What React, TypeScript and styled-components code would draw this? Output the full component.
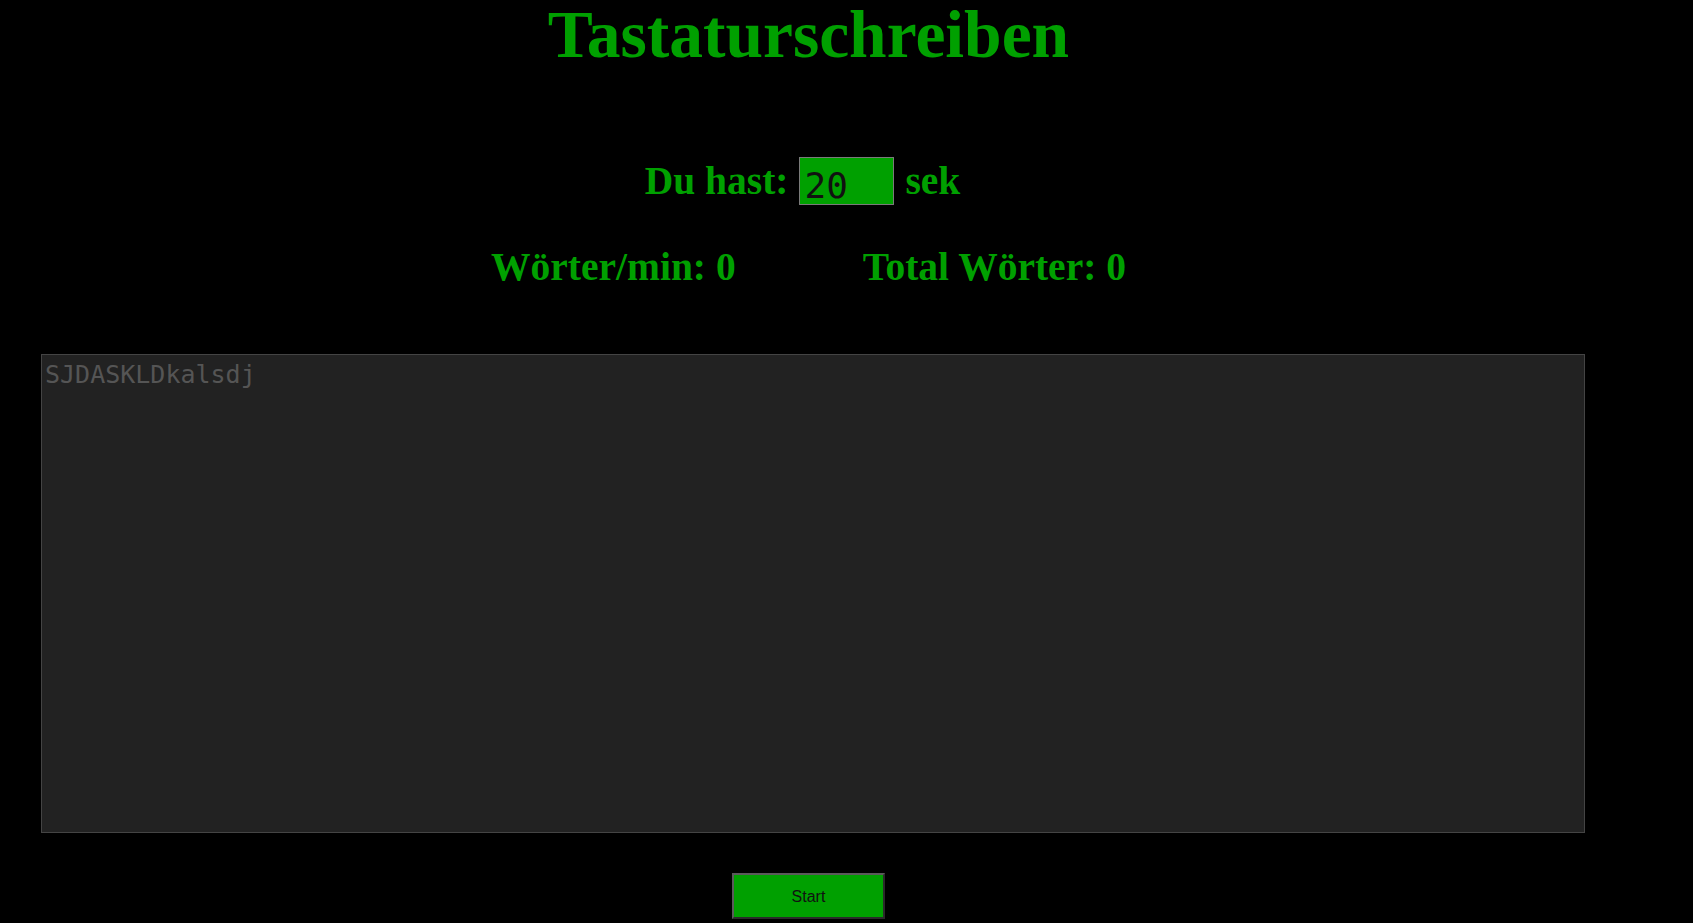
import React from "react";
import styled, { createGlobalStyle } from "styled-components";

const GlobalStyle = createGlobalStyle`
  html, body {
    margin: 0;
    padding: 0;
    background: #000;
  }
  body {
    font-family: "Liberation Serif", "Times New Roman", serif;
    overflow: hidden;
  }
`;

const green = "#00a000";

const Page = styled.main`
  width: 1617px;
  display: flex;
  flex-direction: column;
  align-items: center;
`;

const Title = styled.h1`
  margin: 1px 0 0;
  font-family: "Liberation Serif", "Times New Roman", serif;
  font-weight: 700;
  font-size: 67.5px;
  line-height: 67px;
  color: ${green};
`;

const TimeRow = styled.div`
  margin-top: 89px;
  margin-right: 12px;
  display: flex;
  align-items: center;
  gap: 11px;
  height: 48px;
`;

const Label = styled.span`
  font-family: "Liberation Serif", "Times New Roman", serif;
  font-weight: 700;
  font-size: 39.5px;
  line-height: 40px;
  color: ${green};
  white-space: pre;
`;

const SecondsInput = styled.input`
  box-sizing: border-box;
  width: 95px;
  height: 48px;
  margin: 0;
  padding: 9px 4px 0;
  border: 1px solid #7a7a7a;
  background: ${green};
  color: #111;
  font-family: "DejaVu Sans Mono", monospace;
  font-size: 36px;
  line-height: 38px;
  outline: none;
`;

const StatsRow = styled.div`
  margin-top: 42px;
  display: flex;
  gap: 127px;
  height: 40px;
`;

const TypingArea = styled.textarea`
  box-sizing: border-box;
  align-self: flex-start;
  margin: 67px 0 0 41px;
  width: 1544px;
  height: 479px;
  padding: 5px 3px;
  border: 1px solid #444;
  background: #222;
  color: #ddd;
  font-family: "DejaVu Sans Mono", monospace;
  font-size: 25px;
  line-height: 30px;
  resize: none;
  outline: none;
  &::placeholder {
    color: #555;
  }
`;

const StartButton = styled.button`
  box-sizing: border-box;
  margin-top: 40px;
  width: 153px;
  height: 46px;
  padding: 2px 0 0;
  background: ${green};
  border-style: solid;
  border-width: 2px;
  border-color: #5a5a5a #2a2a2a #2a2a2a #5a5a5a;
  color: #111;
  font-family: "Liberation Sans", Arial, sans-serif;
  font-size: 16px;
  cursor: pointer;
`;

export default function App() {
  return (
    <>
      <GlobalStyle />
      <Page>
        <Title>Tastaturschreiben</Title>
        <TimeRow>
          <Label>Du hast:</Label>
          <SecondsInput type="text" defaultValue="20" />
          <Label>sek</Label>
        </TimeRow>
        <StatsRow>
          <Label>Wörter/min: 0</Label>
          <Label>Total Wörter: 0</Label>
        </StatsRow>
        <TypingArea placeholder="SJDASKLDkalsdj" />
        <StartButton>Start</StartButton>
      </Page>
    </>
  );
}
